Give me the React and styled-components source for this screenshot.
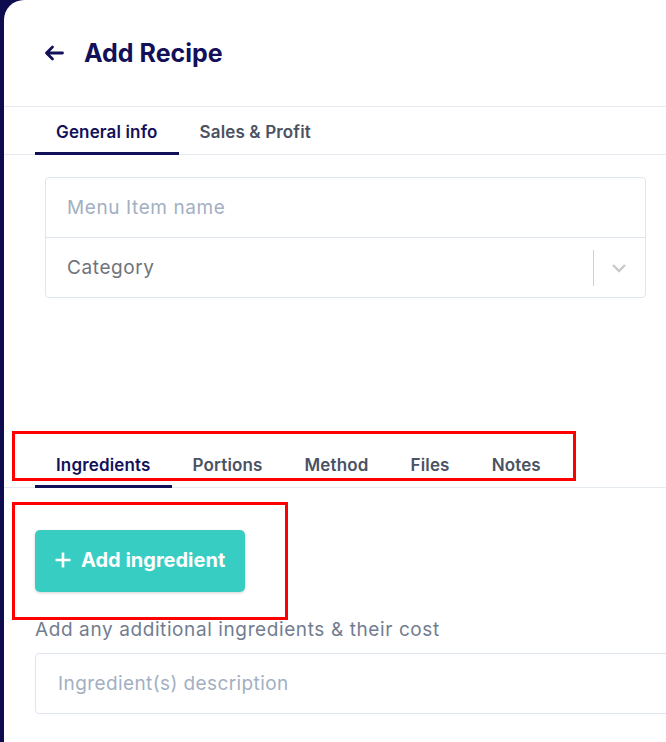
import React from 'react';
import styled, { createGlobalStyle } from 'styled-components';

const navy = '#13105a';
const line = '#e6ebf2';

const GlobalStyle = createGlobalStyle`
  html, body {
    margin: 0;
    padding: 0;
    background: #0e0b4f;
    overflow: hidden;
  }
  * {
    box-sizing: border-box;
  }
  body {
    font-family: Inter, "Noto Sans", sans-serif;
  }
`;

const StyledPanel = styled.div`
  position: relative;
  margin-left: 4px;
  min-height: 742px;
  background: #fff;
  border-top-left-radius: 20px;
  display: flex;
  flex-direction: column;
`;

const StyledHeader = styled.header`
  height: 107px;
  display: flex;
  align-items: center;
  gap: 20px;
  padding: 0 0 0 40px;
  border-bottom: 1px solid ${line};
`;

const StyledBack = styled.button`
  border: none;
  background: none;
  padding: 0;
  display: flex;
  color: ${navy};
  cursor: pointer;
`;

const StyledTitle = styled.h1`
  margin: 0;
  font-size: 25px;
  font-weight: 700;
  color: ${navy};
`;

const StyledTabs = styled.nav`
  display: flex;
  height: 48px;
  padding-left: 31px;
  border-bottom: 1px solid ${line};
  margin-top: ${({ $top }) => $top || 0}px;
`;

const StyledTab = styled.div`
  display: flex;
  align-items: center;
  padding: 4px 21px 0;
  font-size: 17px;
  font-weight: 600;
  letter-spacing: 0.15px;
  color: ${({ $active }) => ($active ? navy : '#4a5264')};
  border-bottom: 3px solid ${({ $active }) => ($active ? navy : 'transparent')};
  margin-bottom: -1px;
`;

const StyledCard = styled.div`
  margin: 22px 20px 0 41px;
  border: 1px solid #dfe5ee;
  border-radius: 4px;
`;

const StyledField = styled.div`
  height: ${({ $first }) => ($first ? 59 : 60)}px;
  display: flex;
  align-items: center;
  padding-left: 21px;
  font-size: 19px;
  letter-spacing: 0.6px;
  color: ${({ $muted }) => ($muted ? '#a3afc2' : '#6f737a')};
  border-top: ${({ $first }) => ($first ? 'none' : '1px solid #dfe5ee')};
`;

const StyledFieldText = styled.span`
  flex: 1;
`;

const StyledSelectIcon = styled.div`
  display: flex;
  align-items: center;
  height: 36px;
  padding: 0 18px 0 17px;
  border-left: 1px solid #cfcfcf;
  color: #c9c9c9;
`;

const StyledSection = styled.div`
  padding: 42px 0 0 31px;
  display: flex;
  flex-direction: column;
  align-items: flex-start;
`;

const StyledAddButton = styled.button`
  display: flex;
  align-items: center;
  gap: 9px;
  height: 62px;
  width: 210px;
  padding: 0 0 2px 19px;
  border: none;
  border-radius: 5px;
  background: #38cdc3;
  color: #fff;
  font-family: Inter, "Noto Sans", sans-serif;
  font-size: 20px;
  font-weight: 700;
  box-shadow: 0 1px 3px rgba(0, 0, 0, 0.18);
  cursor: pointer;
`;

const StyledHint = styled.p`
  margin: 26px 0 0;
  font-size: 19px;
  letter-spacing: 0.6px;
  color: #727d90;
  line-height: 24px;
`;

const StyledInput = styled.div`
  margin-top: 11px;
  width: 660px;
  height: 61px;
  display: flex;
  align-items: center;
  padding: 0 0 1px 22px;
  border: 1px solid #dfe5ee;
  border-radius: 4px;
  font-size: 19px;
  letter-spacing: 0.4px;
  color: #a3afc2;
`;

const StyledMark = styled.div`
  position: absolute;
  left: ${({ $x }) => $x}px;
  top: ${({ $y }) => $y}px;
  width: ${({ $w }) => $w}px;
  height: ${({ $h }) => $h}px;
  border: 3px solid #ff0000;
  pointer-events: none;
`;

const ArrowIcon = () => (
  <svg width="20" height="16" viewBox="0 0 20 16" fill="none">
    <path
      d="M18.5 8H2.5M8.5 2L2.5 8L8.5 14"
      stroke="currentColor"
      strokeWidth="2.8"
      strokeLinecap="round"
      strokeLinejoin="round"
    />
  </svg>
);

const ChevronIcon = () => (
  <svg width="16" height="10" viewBox="0 0 16 10" fill="none">
    <path d="M2 2L8 8L14 2" stroke="currentColor" strokeWidth="2.4" />
  </svg>
);

const PlusIcon = () => (
  <svg width="18" height="18" viewBox="0 0 18 18" fill="none">
    <path d="M9 1.5V16.5M1.5 9H16.5" stroke="currentColor" strokeWidth="2.6" />
  </svg>
);

const topTabs = ['General info', 'Sales & Profit'];
const recipeTabs = ['Ingredients', 'Portions', 'Method', 'Files', 'Notes'];

const App = () => (
  <>
    <GlobalStyle />
    <StyledPanel>
      <StyledHeader>
        <StyledBack aria-label="Back">
          <ArrowIcon />
        </StyledBack>
        <StyledTitle>Add Recipe</StyledTitle>
      </StyledHeader>

      <StyledTabs>
        {topTabs.map((tab, i) => (
          <StyledTab key={tab} $active={i === 0}>
            {tab}
          </StyledTab>
        ))}
      </StyledTabs>

      <StyledCard>
        <StyledField $first $muted>
          <StyledFieldText>Menu Item name</StyledFieldText>
        </StyledField>
        <StyledField>
          <StyledFieldText>Category</StyledFieldText>
          <StyledSelectIcon>
            <ChevronIcon />
          </StyledSelectIcon>
        </StyledField>
      </StyledCard>

      <StyledTabs $top={142}>
        {recipeTabs.map((tab, i) => (
          <StyledTab key={tab} $active={i === 0}>
            {tab}
          </StyledTab>
        ))}
      </StyledTabs>

      <StyledSection>
        <StyledAddButton>
          <PlusIcon />
          Add ingredient
        </StyledAddButton>
        <StyledHint>Add any additional ingredients &amp; their cost</StyledHint>
        <StyledInput>Ingredient(s) description</StyledInput>
      </StyledSection>

      <StyledMark $x={8} $y={431} $w={564} $h={50} />
      <StyledMark $x={8} $y={502} $w={276} $h={118} />
    </StyledPanel>
  </>
);

export default App;
